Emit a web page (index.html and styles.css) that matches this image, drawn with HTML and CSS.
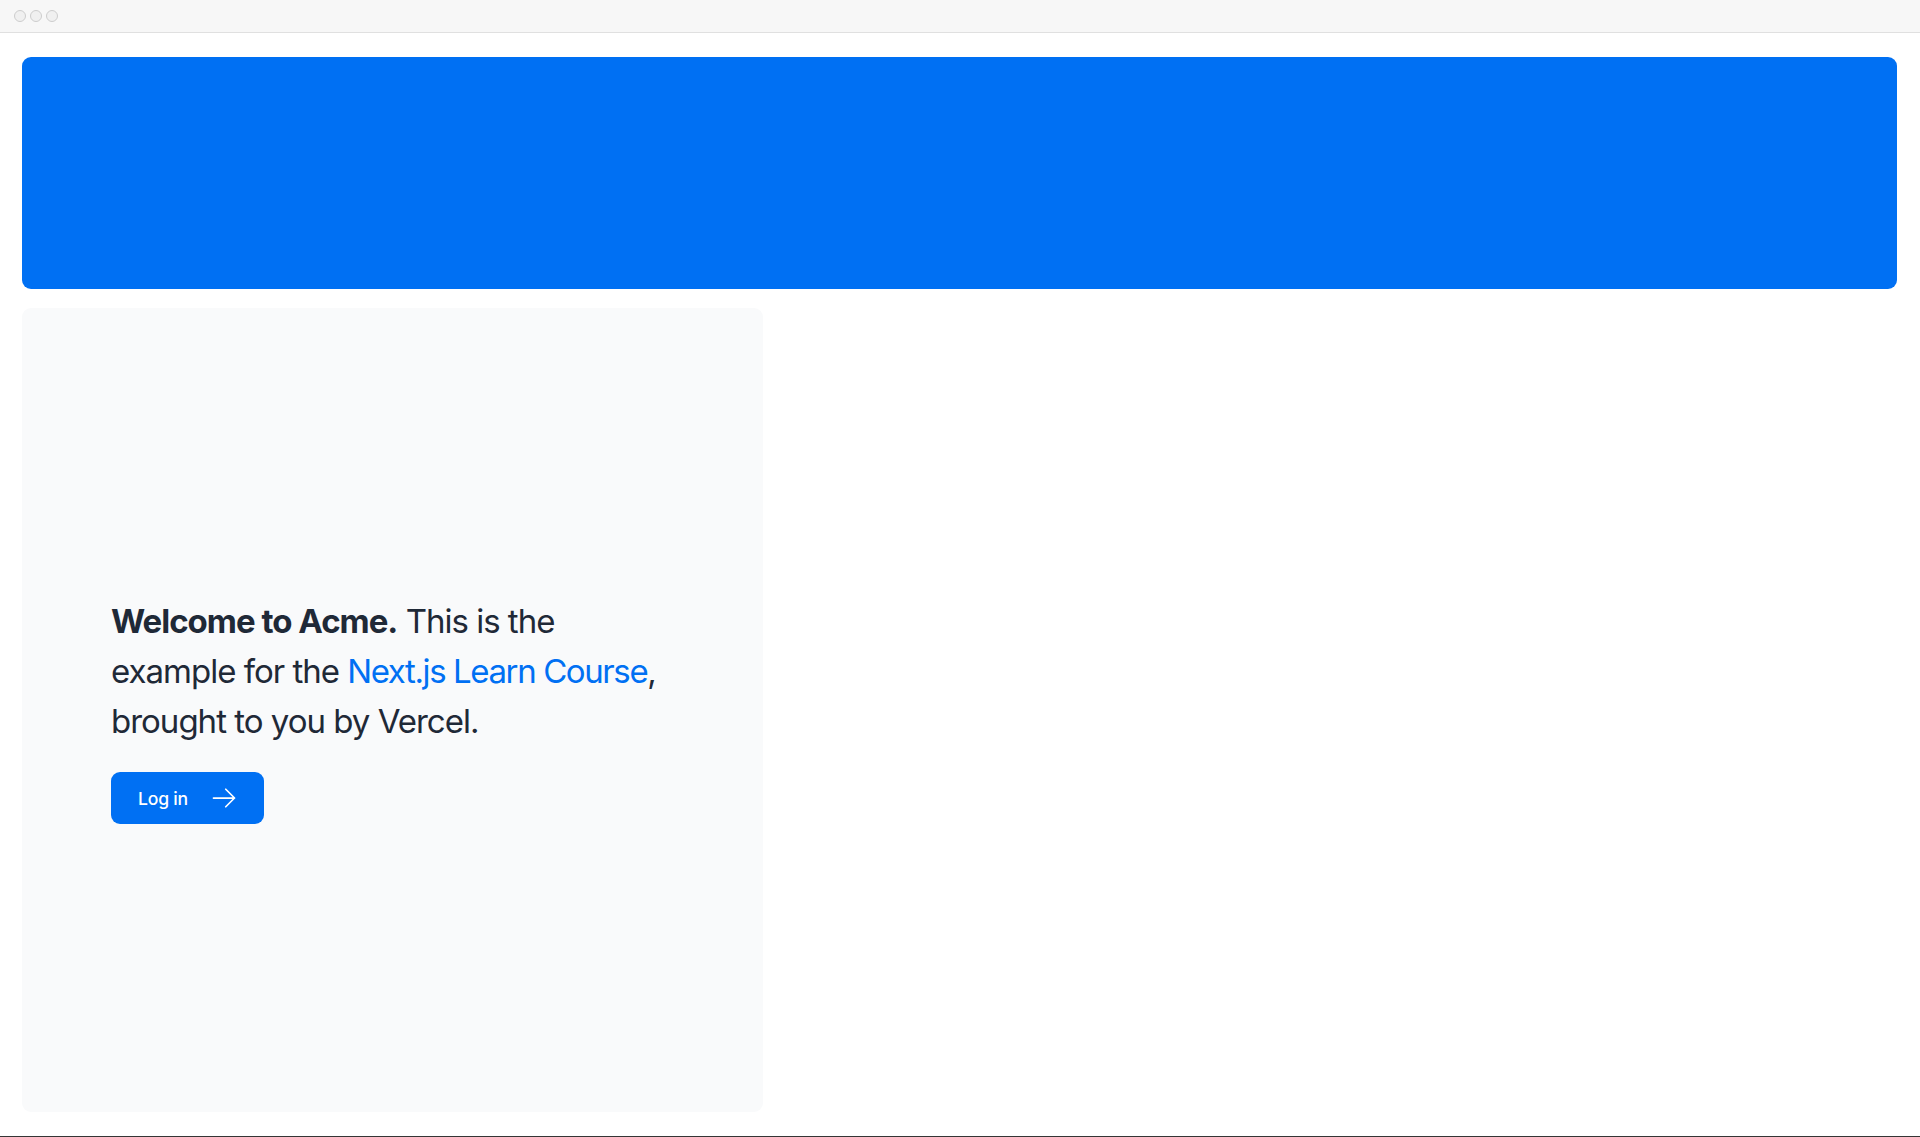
FILE: index.html
```html
<!DOCTYPE html>
<html lang="en">

<head>
    <meta charset="UTF-8">
    <meta name="viewport" content="width=device-width, initial-scale=1.0">
    <title>Acme</title>
    <link rel="stylesheet" href="styles.css">
</head>

<body>
    <div class="topbar">
        <span class="dot"></span>
        <span class="dot"></span>
        <span class="dot"></span>
    </div>
    <main class="page">
        <div class="banner"></div>
        <div class="content">
            <div class="intro">
                <p class="lead">
                    <strong>Welcome to Acme.</strong> This is the example for the
                    <a href="#" class="course">Next.js Learn Course</a>, brought to you by Vercel.
                </p>
                <a href="#" class="loginbtn">
                    <span>Log in</span>
                    <svg class="arrow" viewBox="0 0 24 24" fill="none" stroke="currentColor" stroke-width="1.5">
                        <path stroke-linecap="round" stroke-linejoin="round" d="M13.5 4.5 21 12m0 0-7.5 7.5M21 12H3" />
                    </svg>
                </a>
            </div>
        </div>
    </main>
</body>

</html>
```

FILE: styles.css
```css
* {
    box-sizing: border-box;
}

body {
    margin: 0;
    background-color: #ffffff;
    font-family: "Inter", "Liberation Sans", sans-serif;
    color: #1f2937;
}

.topbar {
    height: 33px;
    display: flex;
    align-items: center;
    gap: 4px;
    padding-left: 14px;
    background-color: #f7f7f7;
    border-bottom: 1px solid #e0e0e0;
}

.dot {
    width: 12px;
    height: 12px;
    border-radius: 50%;
    border: 1.5px solid #cdcdcd;
    background-color: #f0f0f0;
}

.page {
    display: flex;
    flex-direction: column;
    gap: 19px;
    height: 1104px;
    padding: 24px 23px 24px 22px;
    border-bottom: 1px solid #353535;
}

.banner {
    height: 232px;
    flex-shrink: 0;
    border-radius: 9px;
    background-color: #0070f3;
}

.content {
    flex-grow: 1;
    display: flex;
}

.intro {
    width: 741px;
    display: flex;
    flex-direction: column;
    justify-content: center;
    gap: 26px;
    padding: 44px 89px;
    border-radius: 9px;
    background-color: #f9fafb;
}

.lead {
    margin: 0;
    font-size: 33px;
    line-height: 50px;
    letter-spacing: -1px;
    color: #1f2937;
}

.lead strong {
    font-weight: 700;
}

.course {
    color: #0070f3;
    letter-spacing: -1.4px;
    text-decoration: none;
}

.loginbtn {
    align-self: flex-start;
    display: flex;
    align-items: center;
    gap: 22px;
    height: 52px;
    padding: 0 26px 0 27px;
    border-radius: 9px;
    background-color: #0070f3;
    color: #ffffff;
    font-size: 17.6px;
    font-weight: 500;
    letter-spacing: -0.2px;
    text-decoration: none;
}

.arrow {
    width: 28px;
    height: 28px;
}
```
